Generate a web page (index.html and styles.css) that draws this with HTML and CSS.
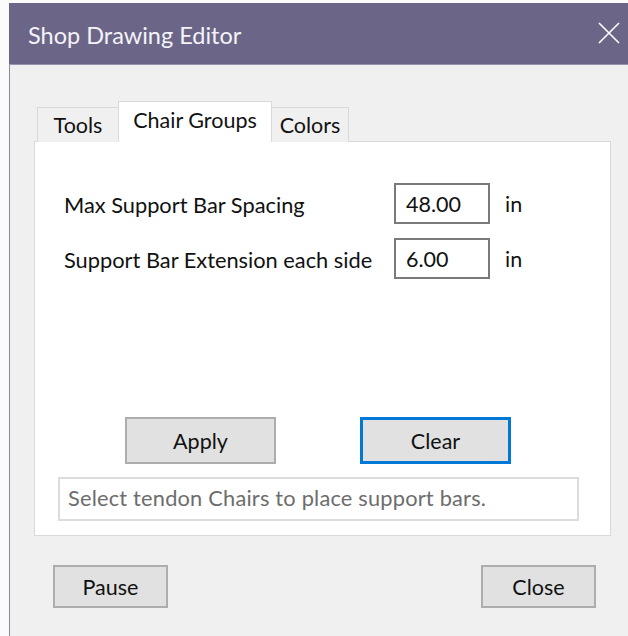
FILE: index.html
```html
<!DOCTYPE html>
<html>
<head>
<meta charset="utf-8">
<title>Shop Drawing Editor</title>
<link rel="stylesheet" href="styles.css">
</head>
<body>
<div class="window">
  <div class="titlebar">
    <span class="title">Shop Drawing Editor</span>
    <svg class="close-x" width="22" height="22" viewBox="0 0 22 22">
      <path d="M1 1 L21 21 M21 1 L1 21" stroke="#ffffff" stroke-width="1.6" fill="none"/>
    </svg>
  </div>
  <div class="client">
    <div class="tabs">
      <div class="tab tab-tools">Tools</div>
      <div class="tab tab-active">Chair Groups</div>
      <div class="tab tab-colors">Colors</div>
    </div>
    <div class="panel">
      <div class="fields">
        <div class="field">
          <span class="label">Max Support Bar Spacing</span>
          <span class="input">48.00</span>
          <span class="unit">in</span>
        </div>
        <div class="field">
          <span class="label">Support Bar Extension each side</span>
          <span class="input">6.00</span>
          <span class="unit">in</span>
        </div>
      </div>
      <div class="actions">
        <button class="btn btn-wide">Apply</button>
        <button class="btn btn-wide btn-focus">Clear</button>
      </div>
      <div class="status">Select tendon Chairs to place support bars.</div>
    </div>
    <div class="footer">
      <button class="btn btn-foot">Pause</button>
      <button class="btn btn-foot">Close</button>
    </div>
  </div>
</div>
</body>
</html>
```
FILE: styles.css
```css
html, body {
  margin: 0;
  padding: 0;
  background: #fbfbfb;
}

body {
  font-family: Lato, "Open Sans", sans-serif;
  color: #111;
  overflow: hidden;
}

.window {
  margin: 3px 0 0 9px;
  width: 619px;
  height: 633px;
  display: flex;
  flex-direction: column;
}

.titlebar {
  height: 61px;
  background: #6b6688;
  border-bottom: 1px solid #9894ad;
  display: flex;
  align-items: center;
  justify-content: space-between;
  padding: 0 8px 0 19px;
}

.title {
  color: #f4f3f8;
  font-size: 23.5px;
  margin-top: 2px;
}

.close-x {
  margin-top: -2px;
}

.client {
  flex: 1;
  background: #f0f0f0;
  border-left: 1px solid #8a86a6;
  padding: 37px 17px 0 24px;
  display: flex;
  flex-direction: column;
}

.tabs {
  display: flex;
  align-items: flex-end;
  height: 40px;
  padding-left: 3px;
  position: relative;
  z-index: 1;
  margin-bottom: -1px;
}

.tab {
  box-sizing: border-box;
  height: 35px;
  border: 1px solid #d9d9d9;
  border-bottom: none;
  background: #f0f0f0;
  font-size: 21.5px;
  padding-top: 4px;
  text-align: center;
}

.tab-tools {
  width: 82px;
}

.tab-active {
  width: 154px;
  height: 41px;
  margin-left: -1px;
  background: #ffffff;
  padding-top: 5px;
  border-color: #d9d9d9;
}

.tab-colors {
  width: 78px;
  margin-left: -1px;
}

.panel {
  box-sizing: border-box;
  height: 395px;
  background: #ffffff;
  border: 1px solid #d9d9d9;
  padding: 41px 31px 0 23px;
  display: flex;
  flex-direction: column;
}

.fields {
  display: flex;
  flex-direction: column;
  gap: 14px;
  padding-left: 6px;
}

.field {
  display: flex;
  align-items: center;
  height: 41px;
}

.label {
  width: 330px;
  font-size: 21.8px;
  margin-top: 2px;
}

.input {
  box-sizing: border-box;
  width: 96px;
  height: 41px;
  border: 2px solid #7a7a7a;
  background: #fff;
  font-size: 21.5px;
  padding: 6px 0 0 10px;
}

.unit {
  margin-left: 15px;
  font-size: 21.5px;
  margin-top: 0;
}

.actions {
  display: flex;
  margin-top: 138px;
  padding-left: 67px;
  gap: 84px;
}

.btn {
  box-sizing: border-box;
  font-family: inherit;
  font-size: 21.5px;
  color: #111;
  background: #e1e1e1;
  border: 2px solid #adadad;
  padding: 1px 0 0;
  margin: 0;
}

.btn-wide {
  width: 151px;
  height: 47px;
}

.btn-focus {
  border: 3px solid #0078d7;
}

.status {
  box-sizing: border-box;
  margin-top: 13px;
  height: 44px;
  border: 2px solid #dcdcdc;
  color: #6d6d6d;
  font-size: 21.8px;
  letter-spacing: 0.2px;
  padding: 5px 0 0 8px;
}

.footer {
  display: flex;
  justify-content: space-between;
  padding: 29px 15px 0 19px;
}

.btn-foot {
  width: 115px;
  height: 43px;
}
```
